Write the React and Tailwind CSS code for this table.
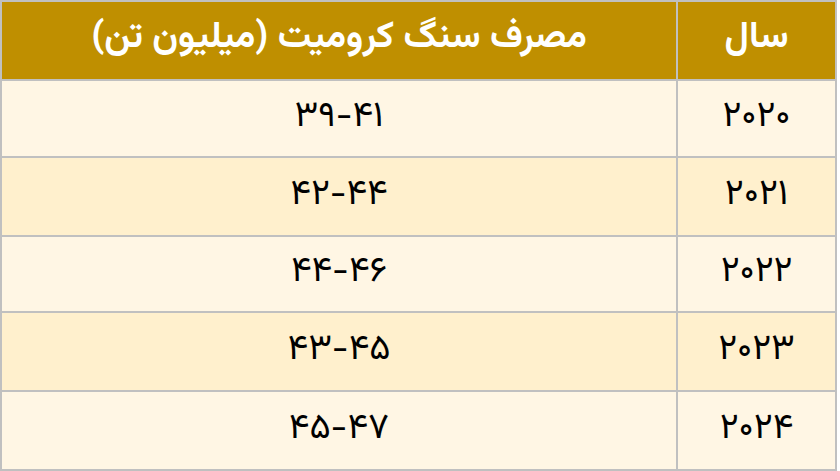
import React from "react";

const rows = [
  { year: "۲۰۲۰", value: "۳۹-۴۱", h: "h-[77px]" },
  { year: "۲۰۲۱", value: "۴۲-۴۴", h: "h-[79px]" },
  { year: "۲۰۲۲", value: "۴۴-۴۶", h: "h-[76px]" },
  { year: "۲۰۲۳", value: "۴۳-۴۵", h: "h-[79px]" },
  { year: "۲۰۲۴", value: "۴۵-۴۷", h: "h-[79px]" },
];

export default function App() {
  return (
    <div className="w-[840px] h-[471px] bg-white">
      <table
        dir="rtl"
        className="w-[837px] table-fixed border-collapse border-2 border-[#c0c0c0] text-[36px]"
        style={{ fontFamily: '"Vazirmatn", "Noto Sans Arabic", "DejaVu Sans", sans-serif' }}
      >
        <colgroup>
          <col className="w-[159px]" />
          <col />
        </colgroup>
        <thead>
          <tr className="h-[79px] bg-[#bf8f00] text-white">
            <th className="border-2 border-[#c0c0c0] font-bold text-[37px] leading-none pb-1">سال</th>
            <th className="border-2 border-[#c0c0c0] font-bold text-[37px] leading-none pb-1">
              مصرف سنگ کرومیت (میلیون تن)
            </th>
          </tr>
        </thead>
        <tbody>
          {rows.map((r, i) => (
            <tr
              key={r.year}
              className={`${r.h} text-black ${i % 2 === 0 ? "bg-[#fff6e4]" : "bg-[#fff0cd]"}`}
            >
              <td className="border-2 border-[#c0c0c0] text-center leading-none pb-1">{r.year}</td>
              <td className="border-2 border-[#c0c0c0] text-center leading-none pb-1">{r.value}</td>
            </tr>
          ))}
        </tbody>
      </table>
    </div>
  );
}
